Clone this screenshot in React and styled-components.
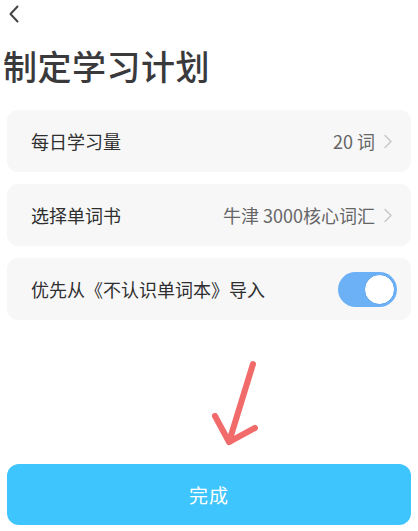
import React, { useState } from 'react';
import styled, { createGlobalStyle } from 'styled-components';

const GlobalStyle = createGlobalStyle`
  html, body {
    margin: 0;
    padding: 0;
    background: #ffffff;
  }
  body {
    font-family: "Noto Sans CJK SC", "Noto Sans", sans-serif;
    color: #333333;
  }
`;

const Page = styled.div`
  position: relative;
  box-sizing: border-box;
  min-height: 100vh;
  padding: 0 7px 6px;
  display: flex;
  flex-direction: column;
`;

const BackButton = styled.button`
  display: flex;
  align-items: center;
  width: 28px;
  height: 28px;
  padding: 0 0 0 1px;
  margin: 0;
  border: none;
  background: none;
  color: #444;
`;

const Title = styled.h1`
  margin: 17px 0 0 -4px;
  font-size: 34px;
  line-height: 41px;
  font-weight: 500;
  color: #3a3a3c;
  letter-spacing: 0.5px;
`;

const List = styled.div`
  margin-top: 24px;
  display: flex;
  flex-direction: column;
  gap: 12px;
`;

const Card = styled.div`
  height: 62px;
  box-sizing: border-box;
  padding: 0 18px 0 24px;
  background: #f7f7f8;
  border-radius: 11px;
  display: flex;
  align-items: center;
  justify-content: space-between;
`;

const Label = styled.span`
  font-size: 18px;
  color: #2f2f2f;
`;

const Value = styled.span`
  display: flex;
  align-items: center;
  gap: 8px;
  font-size: 18px;
  color: #666666;
`;

const Toggle = styled.button`
  position: relative;
  width: 59px;
  height: 35px;
  margin-right: -4px;
  padding: 0;
  border: none;
  border-radius: 18px;
  background: ${({ $on }) => ($on ? '#6cb0f6' : '#d9d9d9')};
  cursor: pointer;
`;

const Knob = styled.span`
  position: absolute;
  top: 2px;
  left: ${({ $on }) => ($on ? '26px' : '2px')};
  width: 31px;
  height: 31px;
  box-sizing: border-box;
  border-radius: 50%;
  background: #ffffff;
  border: 1px solid #5aa2ee;
`;

const Annotation = styled.svg`
  position: absolute;
  left: 208px;
  top: 358px;
  pointer-events: none;
`;

const DoneButton = styled.button`
  margin-top: auto;
  height: 61px;
  border: none;
  border-radius: 12px;
  background: #3ec5fd;
  color: #ffffff;
  font-family: inherit;
  font-size: 19px;
  letter-spacing: 1px;
`;

const Chevron = () => (
  <svg width="10" height="15" viewBox="0 0 10 15" fill="none">
    <path d="M2 1.5l6 6-6 6" stroke="#c6c6c6" strokeWidth="1.4" strokeLinecap="round" strokeLinejoin="round" />
  </svg>
);

export default function App() {
  const [importFirst, setImportFirst] = useState(true);

  return (
    <Page>
      <GlobalStyle />
      <BackButton aria-label="返回">
        <svg width="12" height="18" viewBox="0 0 12 18" fill="none">
          <path d="M9.5 1.5L2.5 9l7 7.5" stroke="#444" strokeWidth="2" strokeLinecap="round" strokeLinejoin="round" />
        </svg>
      </BackButton>
      <Title>制定学习计划</Title>
      <List>
        <Card>
          <Label>每日学习量</Label>
          <Value>
            20 词 <Chevron />
          </Value>
        </Card>
        <Card>
          <Label>选择单词书</Label>
          <Value>
            牛津 3000核心词汇 <Chevron />
          </Value>
        </Card>
        <Card>
          <Label>优先从《不认识单词本》导入</Label>
          <Toggle $on={importFirst} onClick={() => setImportFirst(v => !v)} aria-label="切换">
            <Knob $on={importFirst} />
          </Toggle>
        </Card>
      </List>
      <Annotation width="56" height="92" viewBox="0 0 56 92" fill="none">
        <path
          d="M45 6L21 84M7 58L21 84L47 70"
          stroke="#f26b6b"
          strokeWidth="6"
          strokeLinecap="round"
          strokeLinejoin="round"
        />
      </Annotation>
      <DoneButton>完成</DoneButton>
    </Page>
  );
}
